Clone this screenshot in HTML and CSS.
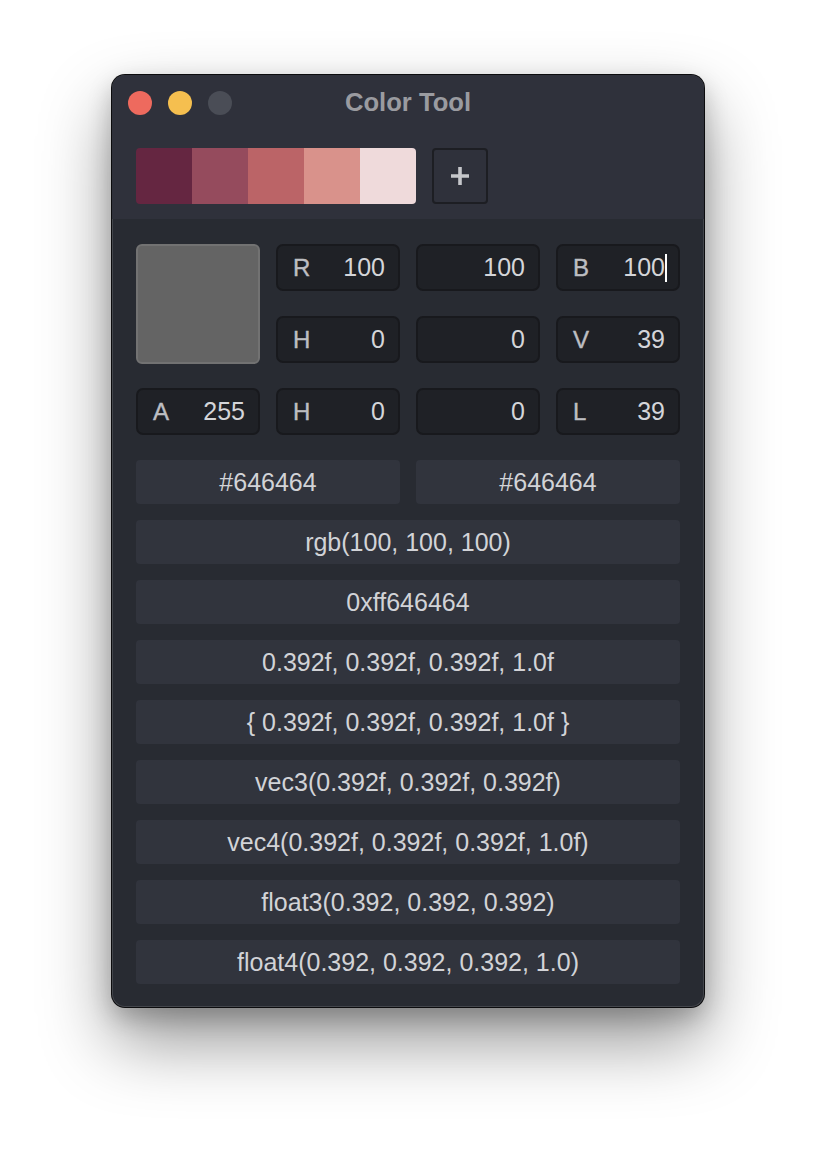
FILE: index.html
```html
<!DOCTYPE html>
<html>
<head>
<meta charset="utf-8">
<link rel="stylesheet" href="styles.css">
</head>
<body>
<div class="stage">
  <div class="window">
    <div class="header">
      <div class="titlebar">
        <div class="lights">
          <span class="light red"></span>
          <span class="light yellow"></span>
          <span class="light gray"></span>
        </div>
        <div class="title">Color Tool</div>
      </div>
      <div class="palette-row">
        <div class="palette">
          <span class="sw s1"></span>
          <span class="sw s2"></span>
          <span class="sw s3"></span>
          <span class="sw s4"></span>
          <span class="sw s5"></span>
        </div>
        <div class="add">
          <svg width="20" height="20" viewBox="0 0 20 20"><path d="M10 1V19M1 10H19" stroke="#c6c7cb" stroke-width="3.6"/></svg>
        </div>
      </div>
    </div>
    <div class="content">
      <div class="grid">
        <div class="preview"></div>
        <div class="field"><span class="lbl">R</span><span class="val">100</span></div>
        <div class="field"><span class="lbl"></span><span class="val">100</span></div>
        <div class="field"><span class="lbl">B</span><span class="val">100<span class="caret"></span></span></div>
        <div class="field"><span class="lbl">H</span><span class="val">0</span></div>
        <div class="field"><span class="lbl"></span><span class="val">0</span></div>
        <div class="field"><span class="lbl">V</span><span class="val">39</span></div>
        <div class="field"><span class="lbl">A</span><span class="val">255</span></div>
        <div class="field"><span class="lbl">H</span><span class="val">0</span></div>
        <div class="field"><span class="lbl"></span><span class="val">0</span></div>
        <div class="field"><span class="lbl">L</span><span class="val">39</span></div>
      </div>
      <div class="rows">
        <div class="pair">
          <div class="row">#646464</div>
          <div class="row">#646464</div>
        </div>
        <div class="row">rgb(100, 100, 100)</div>
        <div class="row">0xff646464</div>
        <div class="row">0.392f, 0.392f, 0.392f, 1.0f</div>
        <div class="row">{ 0.392f, 0.392f, 0.392f, 1.0f }</div>
        <div class="row">vec3(0.392f, 0.392f, 0.392f)</div>
        <div class="row">vec4(0.392f, 0.392f, 0.392f, 1.0f)</div>
        <div class="row">float3(0.392, 0.392, 0.392)</div>
        <div class="row">float4(0.392, 0.392, 0.392, 1.0)</div>
      </div>
    </div>
  </div>
</div>
</body>
</html>
```
FILE: styles.css
```css
* { box-sizing: border-box; }
html, body { margin: 0; padding: 0; background: #ffffff; }
body { font-family: "Liberation Sans", Arial, sans-serif; }
.stage {
  width: 816px;
  height: 1156px;
  padding: 75px 0 0 112px;
}
.window {
  width: 592px;
  height: 932px;
  border-radius: 13px;
  background: #282b32;
  overflow: hidden;
  box-shadow:
    0 0 0 1px #0c0c0e,
    inset 0 0 0 1px rgba(255,255,255,0.13),
    0 34px 70px rgba(0,0,0,0.42),
    0 10px 24px rgba(0,0,0,0.22);
  display: flex;
  flex-direction: column;
}
.header {
  height: 144px;
  background: #2f313b;
  display: flex;
  flex-direction: column;
}
.titlebar {
  height: 56px;
  position: relative;
  display: flex;
  align-items: center;
  justify-content: center;
}
.lights {
  position: absolute;
  left: 16px;
  top: 16px;
  display: flex;
  gap: 16px;
}
.light {
  width: 24px;
  height: 24px;
  border-radius: 50%;
  display: block;
}
.red { background: #ee6a5e; }
.yellow { background: #f5bf4f; }
.gray { background: #4a4d56; }
.title {
  font-weight: bold;
  font-size: 25.6px;
  color: #9a9ba0;
  margin-left: 0;
  margin-top: -1px;
}
.palette-row {
  display: flex;
  gap: 16px;
  padding: 17px 0 0 24px;
}
.palette {
  display: flex;
  border-radius: 4px;
  overflow: hidden;
  height: 56px;
}
.sw { display: block; width: 56px; height: 56px; }
.s1 { background: #652641; }
.s2 { background: #954b5d; }
.s3 { background: #bb6467; }
.s4 { background: #d9928b; }
.s5 { background: #efdadb; }
.add {
  width: 56px;
  height: 56px;
  border: 2px solid #1d1e23;
  border-radius: 4px;
  display: flex;
  align-items: center;
  justify-content: center;
}
.content {
  padding: 25px 24px 23px 24px;
  display: flex;
  flex-direction: column;
  gap: 25px;
}
.grid {
  display: grid;
  grid-template-columns: repeat(4, 124px);
  grid-template-rows: repeat(3, 47px);
  column-gap: 16px;
  row-gap: 25px;
}
.preview {
  grid-row: 1 / span 2;
  height: 120px;
  background: #646464;
  border: 2px solid #727272;
  border-radius: 6px;
}
.field {
  background: #1f2126;
  border: 2px solid #18191d;
  border-radius: 7px;
  display: flex;
  align-items: center;
  justify-content: space-between;
  padding: 0 13px 0 15px;
  font-size: 25px;
}
.lbl { color: #bdbec2; font-size: 24px; -webkit-text-stroke: 0.4px #bdbec2; }
.val { color: #d4d5d9; position: relative; }
.caret {
  position: absolute;
  right: -2px;
  top: 1px;
  width: 2px;
  height: 28px;
  background: #ffffff;
}
.rows {
  display: flex;
  flex-direction: column;
  gap: 16px;
}
.pair {
  display: grid;
  grid-template-columns: 1fr 1fr;
  gap: 16px;
}
.row {
  height: 44px;
  background: #31343d;
  border-radius: 4px;
  display: flex;
  align-items: center;
  justify-content: center;
  color: #d2d3d7;
  font-size: 25px;
}
```
